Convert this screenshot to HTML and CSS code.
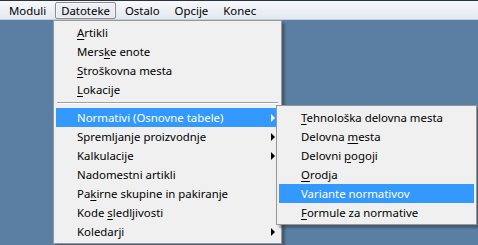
FILE: index.html
```html
<!DOCTYPE html>
<html>
<head>
<meta charset="utf-8">
<link rel="stylesheet" href="styles.css">
</head>
<body>
<div class="screen">
  <nav class="menubar">
    <span class="mb-item">Moduli</span>
    <span class="mb-item mb-open">Datoteke</span>
    <span class="mb-item">Ostalo</span>
    <span class="mb-item">Opcije</span>
    <span class="mb-item">Konec</span>
  </nav>

  <ul class="menu main-menu">
    <li class="mi"><u>A</u>rtikli</li>
    <li class="mi">Mers<u>k</u>e enote</li>
    <li class="mi"><u>S</u>troškovna mesta</li>
    <li class="mi"><u>L</u>okacije</li>
    <li class="sep"></li>
    <li class="mi sub active">Normativi (Osnovne tabele)</li>
    <li class="mi sub">Spremljanje proizvodnje</li>
    <li class="mi sub">Kalkulacije</li>
    <li class="mi">Nadomestni artikli</li>
    <li class="mi">Pa<u>k</u>irne skupine in pakiranje</li>
    <li class="mi">Kode <u>s</u>ledljivosti</li>
    <li class="mi sub">Koledarji</li>
  </ul>

  <ul class="menu sub-menu">
    <li class="mi"><u>T</u>ehnološka delovna mesta</li>
    <li class="mi">Delovna <u>m</u>esta</li>
    <li class="mi">Delovni <u>p</u>ogoji</li>
    <li class="mi"><u>O</u>rodja</li>
    <li class="mi active">Variante normativov</li>
    <li class="mi"><u>F</u>ormule za normative</li>
  </ul>
</div>
</body>
</html>
```

FILE: styles.css
```css
* { box-sizing: border-box; }
html, body { margin: 0; padding: 0; }
body {
  width: 478px;
  height: 245px;
  overflow: hidden;
  background: #5b7fa3;
  font-family: "Noto Sans", "Open Sans", sans-serif;
  font-size: 11.4px;
  color: #000;
}
.screen { position: relative; width: 478px; height: 245px; }

.menubar {
  display: flex;
  align-items: center;
  gap: 3px;
  height: 20px;
  padding-left: 3px;
  border-top: 1px solid #2a3440;
  border-bottom: 1px solid #c5cdd8;
  background: linear-gradient(#f6f8fb, #e3e9f1);
}
.mb-item {
  padding: 0 5px;
  height: 17px;
  line-height: 16px;
  border: 1px solid transparent;
  border-radius: 2px;
}
.mb-open {
  border-color: #8c8c8c;
  background: linear-gradient(#eef1f5, #e4e8ee);
  box-shadow: inset 0 0 0 1px #ffffff88;
}

.menu {
  position: absolute;
  margin: 0;
  padding: 2px;
  list-style: none;
  background: #f0f0f0;
  border: 1px solid #979797;
  box-shadow: 3px 3px 2px rgba(40, 50, 60, 0.45);
}
.main-menu { left: 53px; top: 20px; width: 229px; }
.sub-menu { left: 276px; top: 105px; width: 201px; }

.mi {
  position: relative;
  height: 19px;
  line-height: 20px;
  padding-left: 21px;
  white-space: nowrap;
}
.sub-menu .mi { padding-left: 22px; }
.mi u { text-decoration-thickness: 1px; text-underline-offset: 2px; }
.mi.active { background: #3399ff; color: #fff; }
.sep {
  height: 9px;
  margin: 0 1px;
  position: relative;
}
.sep::after {
  content: "";
  position: absolute;
  left: 0; right: 0; top: 3px;
  border-top: 1px solid #a0a0a0;
  border-bottom: 1px solid #ffffff;
}
.sub::after {
  content: "";
  position: absolute;
  right: 4px;
  top: 6px;
  border-left: 4px solid #000;
  border-top: 4px solid transparent;
  border-bottom: 4px solid transparent;
}
.sub.active::after { border-left-color: #fff; }
```
